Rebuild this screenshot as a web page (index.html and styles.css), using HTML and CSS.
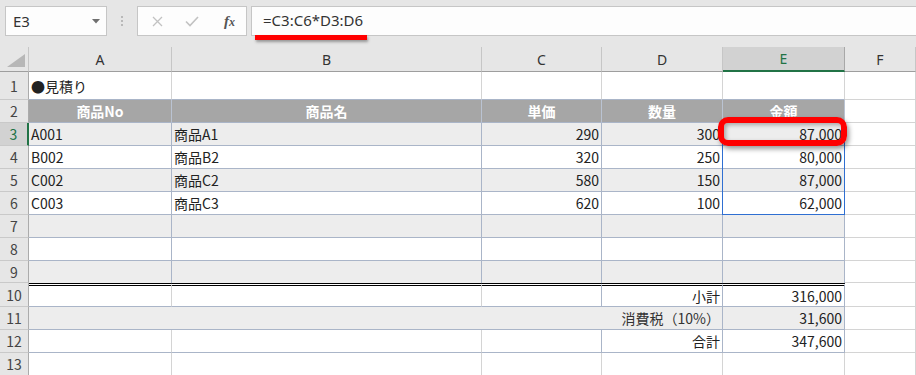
FILE: index.html
```html
<!DOCTYPE html>
<html lang="ja">
<head>
    <meta charset="UTF-8">
    <title>見積り - Excel</title>
    <link rel="stylesheet" href="styles.css">
</head>
<body>
    <div class="formula-bar">
        <div class="name-box">
            <span>E3</span>
            <svg width="8" height="5" viewBox="0 0 8 5"><path d="M0 0h8L4 4.5z" fill="#6f6f6f"/></svg>
        </div>
        <div class="grip">
            <svg width="2" height="10" viewBox="0 0 2 10"><rect y="0" width="2" height="2" fill="#b9b9b9"/><rect y="4" width="2" height="2" fill="#b9b9b9"/><rect y="8" width="2" height="2" fill="#b9b9b9"/></svg>
        </div>
        <div class="fn-box">
            <svg class="ico-x" width="11" height="11" viewBox="0 0 11 11"><path d="M1 1l9 9M10 1l-9 9" stroke="#c2c2c2" stroke-width="1.3" fill="none"/></svg>
            <svg class="ico-ok" width="14" height="11" viewBox="0 0 14 11"><path d="M1 5.5l4 4L13 1" stroke="#c2c2c2" stroke-width="1.6" fill="none"/></svg>
            <span class="fx">f<span>x</span></span>
        </div>
        <div class="formula">=C3:C6*D3:D6</div>
        <!-- red marker under the formula -->
        <div class="mark-line"></div>
    </div>

    <div class="sheet">
        <!-- column headers -->
        <div class="corner"><svg width="18" height="13" viewBox="0 0 18 13"><path d="M18 0V13H0z" fill="#b7b7b7"/></svg></div>
        <div class="hd">A</div>
        <div class="hd">B</div>
        <div class="hd">C</div>
        <div class="hd">D</div>
        <div class="hd sel">E</div>
        <div class="hd">F</div>

        <div class="rh">1</div>
        <div class="c bb">●見積り</div>
        <div class="c bb"></div>
        <div class="c bb"></div>
        <div class="c bb"></div>
        <div class="c bb"></div>
        <div class="c"></div>

        <div class="rh">2</div>
        <div class="c h">商品No</div>
        <div class="c h">商品名</div>
        <div class="c h">単価</div>
        <div class="c h">数量</div>
        <div class="c h">金額</div>
        <div class="c"></div>

        <div class="rh sel">3</div>
        <div class="c t s">A001</div>
        <div class="c t s">商品A1</div>
        <div class="c t s n">290</div>
        <div class="c t s n">300</div>
        <div class="c t s n">87,000</div>
        <div class="c"></div>

        <div class="rh">4</div>
        <div class="c t">B002</div>
        <div class="c t">商品B2</div>
        <div class="c t n">320</div>
        <div class="c t n">250</div>
        <div class="c t n">80,000</div>
        <div class="c"></div>

        <div class="rh">5</div>
        <div class="c t s">C002</div>
        <div class="c t s">商品C2</div>
        <div class="c t s n">580</div>
        <div class="c t s n">150</div>
        <div class="c t s n">87,000</div>
        <div class="c"></div>

        <div class="rh">6</div>
        <div class="c t">C003</div>
        <div class="c t">商品C3</div>
        <div class="c t n">620</div>
        <div class="c t n">100</div>
        <div class="c t n">62,000</div>
        <div class="c"></div>

        <div class="rh">7</div>
        <div class="c t s"></div>
        <div class="c t s"></div>
        <div class="c t s"></div>
        <div class="c t s"></div>
        <div class="c t s"></div>
        <div class="c"></div>

        <div class="rh">8</div>
        <div class="c t"></div>
        <div class="c t"></div>
        <div class="c t"></div>
        <div class="c t"></div>
        <div class="c t"></div>
        <div class="c"></div>

        <div class="rh">9</div>
        <div class="c t s nb"></div>
        <div class="c t s nb"></div>
        <div class="c t s nb"></div>
        <div class="c t s nb"></div>
        <div class="c t s nb"></div>
        <div class="c"></div>

        <div class="rh">10</div>
        <div class="c t lv dbl"></div>
        <div class="c t lv dbl"></div>
        <div class="c t dbl"></div>
        <div class="c t n dbl">小計</div>
        <div class="c t n dbl">316,000</div>
        <div class="c"></div>

        <div class="rh">11</div>
        <div class="c t s n wide">消費税（10%）</div>
        <div class="c t s n">31,600</div>
        <div class="c"></div>

        <div class="rh">12</div>
        <div class="c t lv"></div>
        <div class="c t lv"></div>
        <div class="c t"></div>
        <div class="c t n">合計</div>
        <div class="c t n">347,600</div>
        <div class="c"></div>

        <div class="rh">13</div>
        <div class="c"></div>
        <div class="c"></div>
        <div class="c"></div>
        <div class="c"></div>
        <div class="c"></div>
        <div class="c"></div>

        <!-- spill range E3:E6 and the red marker on E3 -->
        <div class="spill"></div>
        <div class="mark-box"></div>
    </div>
</body>
</html>
```

FILE: styles.css
```css
* {
    box-sizing: border-box;
}

body {
    margin: 0;
    width: 916px;
    height: 375px;
    overflow: hidden;
    background-color: #e6e6e6;
    font-family: "Noto Sans CJK JP", sans-serif;
    color: #222;
}

/* formula bar */

.formula-bar {
    position: relative;
    height: 47px;
    display: flex;
    align-items: flex-start;
    padding: 6px 0 0 5px;
}

.name-box {
    width: 102px;
    height: 30px;
    display: flex;
    align-items: center;
    justify-content: space-between;
    padding: 0 6px 0 7px;
    background: #fdfdfd;
    border: 1px solid #c6c6c6;
    font-family: "Noto Sans", sans-serif;
    font-size: 15px;
    color: #333;
}

.grip {
    width: 30px;
    height: 30px;
    display: flex;
    align-items: center;
    justify-content: center;
}

.fn-box {
    width: 110px;
    height: 30px;
    display: flex;
    align-items: center;
    padding-left: 14px;
    background: #fdfdfd;
    border: 1px solid #c6c6c6;
}

.ico-ok {
    margin-left: 22px;
}

.fx {
    margin-left: 25px;
    font-family: "Liberation Serif", serif;
    font-style: italic;
    font-weight: bold;
    font-size: 15px;
    color: #555;
}

.fx span {
    font-size: 12px;
}

.formula {
    flex: 1;
    height: 30px;
    margin-left: 4px;
    padding-left: 11px;
    background: #fdfdfd;
    border: 1px solid #c6c6c6;
    border-right: none;
    font-family: "Noto Sans", sans-serif;
    font-size: 15px;
    line-height: 27px;
    color: #333;
}

.mark-line {
    position: absolute;
    left: 255px;
    top: 35px;
    width: 112px;
    height: 5px;
    background: #ff0000;
    box-shadow: 1px 2px 3px rgba(0, 0, 0, 0.35);
}

/* grid */

.sheet {
    position: relative;
    display: grid;
    grid-template-columns: 29px 143px 310px 120px 121px 122px 71px;
    grid-template-rows: 25px 28px repeat(7, 23px) 22px 24px repeat(3, 23px);
    background: #fff;
}

.corner {
    background: #e6e6e6;
    border-right: 1px solid #c6c6c6;
    border-bottom: 1px solid #9e9e9e;
    display: flex;
    align-items: flex-end;
    justify-content: flex-end;
    padding: 0 3px 4px 0;
}

.hd {
    background: #e6e6e6;
    border-right: 1px solid #c6c6c6;
    border-bottom: 1px solid #9e9e9e;
    display: flex;
    align-items: center;
    justify-content: center;
    font-family: "Noto Sans", sans-serif;
    font-size: 14px;
    color: #333;
}

.hd.sel {
    background: #d2d2d2;
    color: #217346;
    border-right-color: #a8a8a8;
    border-bottom: 2px solid #217346;
}

.rh {
    background: #e6e6e6;
    border-right: 1px solid #ababab;
    border-bottom: 1px solid #c9c9c9;
    display: flex;
    align-items: center;
    justify-content: center;
    font-size: 14px;
    color: #444;
}

.rh.sel {
    background: #d2d2d2;
    color: #217346;
    border-right: 2px solid #217346;
}

.c {
    border-right: 1px solid #d4d4d4;
    border-bottom: 1px solid #d4d4d4;
    display: flex;
    align-items: center;
    padding: 0 2px 0 2px;
    font-size: 14px;
    white-space: nowrap;
    overflow: hidden;
}

.bb {
    border-bottom-color: #aab5c8;
}

.t {
    border-color: #aab5c8;
}

.lv {
    border-right-color: #d4d4d4;
}

.s {
    background: #ededed;
}

.n {
    justify-content: flex-end;
}

.h {
    background: #a6a6a6;
    color: #fff;
    font-weight: bold;
    justify-content: center;
    border-right-color: #bac3d2;
    border-bottom-color: #aab5c8;
}

.wide {
    grid-column: span 4;
    color: #333;
}

.nb {
    border-bottom: none;
}

.dbl {
    border-top: 3px double #000;
}

.spill {
    position: absolute;
    left: 722px;
    top: 75px;
    width: 123px;
    height: 93px;
    border: 1px solid #2f6fd2;
}

.mark-box {
    position: absolute;
    left: 718px;
    top: 70px;
    width: 129px;
    height: 29px;
    border: 6px solid #ff0000;
    border-radius: 10px;
    box-shadow: 2px 3px 5px rgba(0, 0, 0, 0.4), inset 2px 2px 4px rgba(0, 0, 0, 0.3);
}
```
